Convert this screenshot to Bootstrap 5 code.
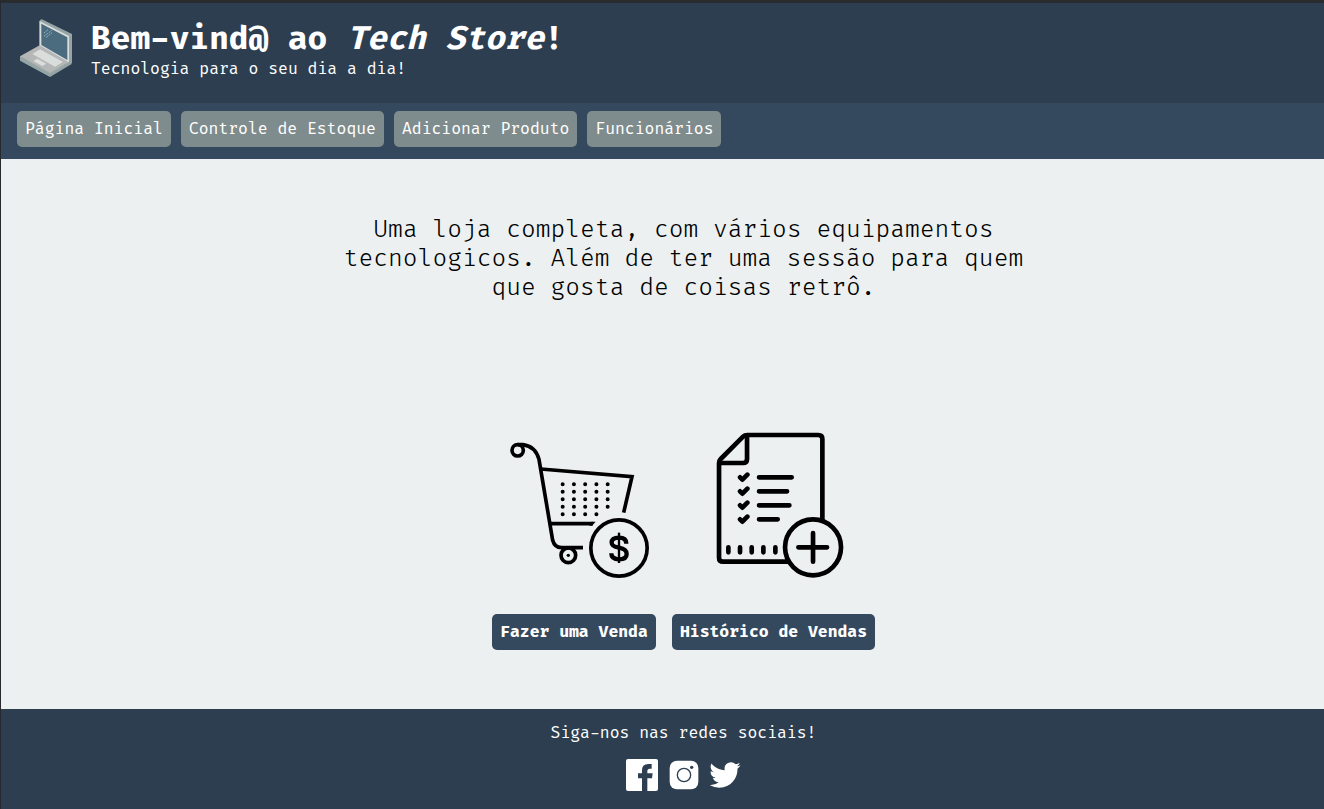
<!DOCTYPE html>
<html lang="pt-br">
<head>
<meta charset="utf-8">
<meta name="viewport" content="width=device-width, initial-scale=1">
<title>Tech Store</title>
<link href="https://cdn.jsdelivr.net/npm/bootstrap@5.3.0/dist/css/bootstrap.min.css" rel="stylesheet">
<style>
  body {
    font-family: "Fira Code", "Fira Mono", "DejaVu Sans Mono", monospace;
    font-size: 16px;
    line-height: 20px;
    color: #000;
    background: #ecf0f1;
    border-top: 3px solid #2a2b2d;
    border-left: 1px solid #26292d;
  }
  .site-header { background: #2c3e50; min-height: 100px; padding: 16px 19px; gap: 19px; }
  .site-header h1 { font-size: 32px; line-height: 40px; }
  .site-menu { background: #34495e; padding: 8px 16px 12px; gap: 10px; }
  .btn { font-size: 16px; line-height: 20px; padding: 8px; border: 0; border-radius: 5px; color: #fff; }
  .btn-menu, .btn-menu:hover { background: #7f8c8d; color: #fff; }
  .btn-action, .btn-action:hover { background: #34495e; color: #fff; }
  .shifted { padding-left: 42px; }
  main { padding-top: 56px; padding-bottom: 59px; }
  .intro { max-width: 700px; font-size: 24px; font-weight: 350; line-height: 29px; }
  .actions { gap: 16px; }
  .action-item { gap: 34px; }
  .ink { fill: none; stroke: #000; }
  .site-footer { background: #2c3e50; padding-top: 14px; padding-bottom: 18px; }
  .social { gap: 10px; margin-top: 16px; }
</style>
</head>
<body class="d-flex flex-column min-vh-100">

<header class="site-header d-flex align-items-start text-white">
  <svg class="flex-shrink-0" width="52" height="58" viewBox="60 57 156 174" aria-hidden="true">
    <path fill="#95a5a5" d="M118 64 124 57 216 102V190L205 196 118 146Z"/>
    <path fill="#d9dddc" d="M119 63 207 108V188L119 137Z"/>
    <path fill="#4b6c7e" d="M124 71 202 112V180L124 135Z"/>
    <path fill="#95a5a5" d="M60 168 150 216 205 187 215 192 150 231 60 182Z"/>
    <path fill="#b5b7b7" d="M60 169 119 136 206 187 150 219Z"/>
    <path fill="#d9dddc" d="M97 162 120 148 189 186 165 200ZM100 183 112 176 139 191 127 198Z"/>
    <path stroke="#91b9cb" stroke-width="3" stroke-dasharray="6 3" d="M132 99 144 89M132 109 155 91M139 112 156 98"/>
  </svg>
  <div>
    <h1 class="fw-bold m-0">Bem-vind@ ao <em>Tech Store</em>!</h1>
    <p class="m-0">Tecnologia para o seu dia a dia!</p>
  </div>
</header>

<nav class="site-menu d-flex flex-wrap" aria-label="Menu principal">
  <a class="btn btn-menu" href="#">Página Inicial</a>
  <a class="btn btn-menu" href="#">Controle de Estoque</a>
  <a class="btn btn-menu" href="#">Adicionar Produto</a>
  <a class="btn btn-menu" href="#">Funcionários</a>
</nav>

<main class="shifted flex-grow-1 d-flex flex-column align-items-center justify-content-between">
  <p class="intro text-center m-0">Uma loja completa, com vários equipamentos tecnologicos. Além de ter uma sessão para quem que gosta de coisas retrô.</p>

  <div class="actions d-flex flex-wrap justify-content-center">
    <div class="action-item d-flex flex-column">
      <svg class="w-100" height="150" viewBox="-24 15 492 450" aria-hidden="true">
        <g class="ink" stroke-width="11">
          <circle cx="53" cy="76" r="17"/>
          <path d="M53 59H69Q106 64 117 103L158 346Q164 368 184 368H249"/>
          <path d="M122 132 396 155 371 263"/>
          <path d="M151 296H279"/>
          <circle cx="205" cy="391" r="22"/>
          <circle cx="357" cy="369" r="84.500"/>
        </g>
        <path d="M274 290H287L276 302H268Z"/>
        <circle cx="205" cy="391" r="5"/>
        <path class="ink" stroke-width="12" stroke-linecap="round" stroke-dasharray="0 33.750" d="M188 178H325M188 200H325M188 223H325M188 245H325M188 268H300"/>
        <path class="ink" stroke-width="13" d="M379 356Q379 338 357 338Q335 338 335 353Q335 364 357 368Q380 372 380 387Q380 403 357 403Q334 403 334 385"/>
        <path class="ink" stroke-width="7" d="M357 323V414"/>
      </svg>
      <button type="button" class="btn btn-action fw-bold">Fazer uma Venda</button>
    </div>
    <div class="action-item d-flex flex-column">
      <svg class="w-100" height="150" viewBox="-84 30 609 450" aria-hidden="true">
        <g class="ink" stroke-width="14" stroke-linecap="round" stroke-linejoin="round">
          <path stroke-linecap="butt" d="M367 299V57Q367 45 355 45H142Q134 45 129 50L62 117Q57 122 57 130V413Q57 425 69 425H266"/>
          <path d="M141 48V117Q141 129 129 129H61"/>
          <path d="M177 172H275M177 214H261M177 256H268M177 298H233"/>
          <path d="M120 172 127 179 142 164M120 214 127 221 142 206M120 256 127 263 142 248M120 298 127 305 142 290"/>
          <path d="M85 382V397M120 382V397M155 382V397M190 382V397M226 382V397"/>
          <circle cx="339" cy="382" r="84"/>
          <path d="M295 382H381M339 339V425"/>
        </g>
      </svg>
      <button type="button" class="btn btn-action fw-bold">Histórico de Vendas</button>
    </div>
  </div>
</main>

<footer class="site-footer shifted d-flex flex-column align-items-center text-white">
  <p class="m-0">Siga-nos nas redes sociais!</p>
  <div class="social d-flex">
    <a class="d-flex" href="#" aria-label="Facebook">
      <svg width="32" height="32" viewBox="0 0 96 96" aria-hidden="true">
        <rect width="96" height="96" rx="6" fill="#fff"/>
        <path fill="#2c3e50" d="M48 96V58H36V43H48V33Q48 15 67 15H77V29H71Q64 29 64 37V43H80L78 58H64V96Z"/>
      </svg>
    </a>
    <a class="d-flex" href="#" aria-label="Instagram">
      <svg width="32" height="32" viewBox="0 0 96 96" aria-hidden="true">
        <rect x="5" y="5" width="86" height="86" rx="22" fill="#fff"/>
        <circle cx="48" cy="48" r="20" fill="none" stroke="#2c3e50" stroke-width="4"/>
        <circle cx="71" cy="25" r="5" fill="#2c3e50"/>
      </svg>
    </a>
    <a class="d-flex" href="#" aria-label="Twitter">
      <svg width="32" height="32" viewBox="0.500 -0.300 24.500 24.500" aria-hidden="true">
        <path fill="#fff" d="M23.950 4.570a10 10 0 0 1-2.820.770 4.960 4.960 0 0 0 2.160-2.720c-.950.550-2 .950-3.130 1.180a4.920 4.920 0 0 0-8.380 4.480C7.690 8.090 4.070 6.130 1.640 3.160a4.820 4.820 0 0 0-.670 2.480c0 1.710.870 3.210 2.190 4.100a4.900 4.900 0 0 1-2.230-.620v.060a4.920 4.920 0 0 0 3.950 4.830 5 5 0 0 1-2.210.080 4.940 4.940 0 0 0 4.600 3.420A9.870 9.870 0 0 1 0 19.540a13.990 13.990 0 0 0 7.550 2.210c9.050 0 14-7.500 14-13.980 0-.210 0-.420-.010-.630a9.940 9.940 0 0 0 2.410-2.570z"/>
      </svg>
    </a>
  </div>
</footer>

<script src="https://cdn.jsdelivr.net/npm/bootstrap@5.3.0/dist/js/bootstrap.bundle.min.js"></script>
</body>
</html>
